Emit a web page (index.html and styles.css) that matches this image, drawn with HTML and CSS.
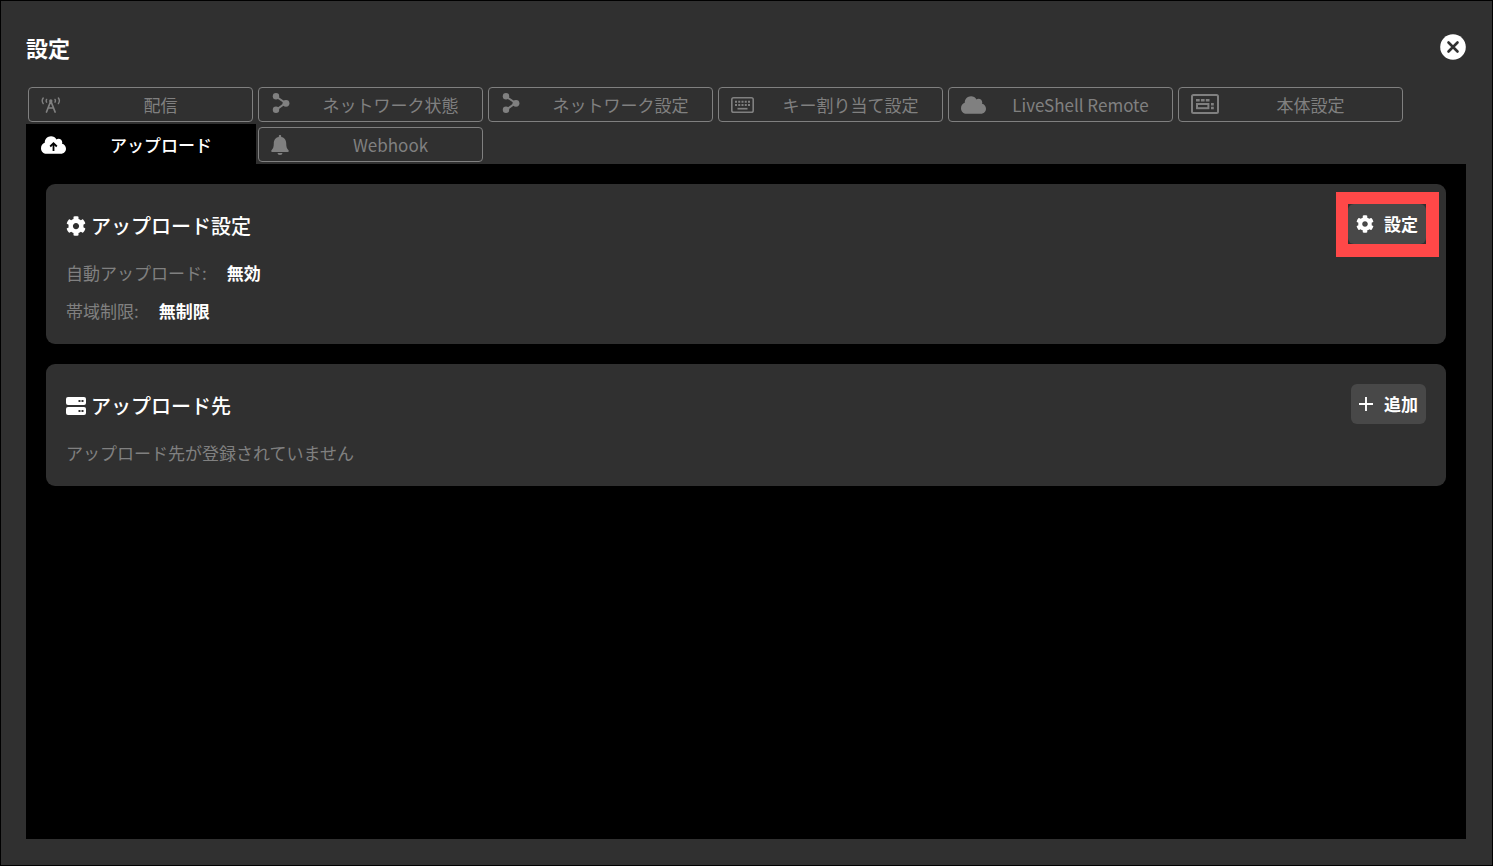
FILE: index.html
```html
<!DOCTYPE html>
<html lang="ja">
<head>
<meta charset="utf-8">
<title>設定</title>
<link rel="stylesheet" href="styles.css">
</head>
<body>
<svg class="sprite" aria-hidden="true">
  <symbol id="cloud" viewBox="0 32 640 448"><path d="M537.6 226.6c4.1-10.7 6.4-22.4 6.4-34.6 0-53-43-96-96-96-19.7 0-38.1 6-53.3 16.2C367 64.2 315.3 32 256 32c-88.400 0-160 71.600-160 160 0 2.700.1 5.400.2 8.100C40.200 219.800 0 273.200 0 336c0 79.500 64.500 144 144 144h368c70.700 0 128-57.300 128-128 0-61.900-44-113.600-102.400-125.400z"/></symbol>
  <symbol id="gear" viewBox="0 0 512 512"><path d="M487.4 315.7l-42.6-24.6c4.3-23.2 4.3-47 0-70.2l42.6-24.6c4.9-2.8 7.1-8.6 5.500-14-11.100-35.600-30-67.800-54.700-94.600-3.800-4.100-10-5.100-14.800-2.300L380.800 110c-17.900-15.400-38.500-27.300-60.800-35.100V25.800c0-5.600-3.900-10.500-9.400-11.700-36.700-8.200-74.300-7.800-109.200 0-5.500 1.200-9.400 6.100-9.400 11.700V75c-22.200 7.900-42.800 19.800-60.800 35.100L88.700 85.500c-4.900-2.800-11-1.900-14.800 2.300-24.700 26.700-43.600 58.900-54.700 94.600-1.700 5.400.6 11.200 5.500 14L67.300 221c-4.300 23.200-4.300 47 0 70.200l-42.600 24.600c-4.900 2.800-7.100 8.600-5.500 14 11.100 35.600 30 67.800 54.700 94.600 3.800 4.100 10 5.100 14.800 2.300l42.600-24.600c17.900 15.400 38.500 27.300 60.800 35.100v49.200c0 5.600 3.900 10.500 9.400 11.700 36.700 8.200 74.300 7.800 109.200 0 5.500-1.200 9.400-6.100 9.400-11.700v-49.200c22.200-7.900 42.800-19.800 60.800-35.100l42.600 24.600c4.900 2.800 11 1.900 14.800-2.300 24.700-26.700 43.600-58.900 54.700-94.600 1.500-5.500-.7-11.300-5.600-14.100zM256 336c-44.100 0-80-35.900-80-80s35.900-80 80-80 80 35.900 80 80-35.900 80-80 80z"/></symbol>
  <symbol id="share" viewBox="0 0 18 20"><path d="M4 3.500 13.500 10 4 17" fill="none" stroke="currentColor" stroke-width="2"/><circle cx="4" cy="3.300" r="3.200"/><circle cx="14" cy="10.300" r="3.400"/><circle cx="4" cy="16.700" r="3.200"/></symbol>
</svg>
<main class="dialog">
  <header class="header">
    <h1 class="title">設定</h1>
    <button class="close" type="button" aria-label="閉じる">
      <svg viewBox="0 0 26 26"><circle cx="13" cy="13" r="12.800" fill="#fff"/><path d="m8.500 8.500 9 9m0-9-9 9" fill="none" stroke="#303030" stroke-width="2.600" stroke-linecap="round"/></svg>
    </button>
  </header>

  <nav class="tabs" aria-label="設定メニュー">
    <button class="tab" type="button"><span class="tab-icon"><svg width="20" height="16" viewBox="0 0 20 16"><g fill="none" stroke="currentColor" stroke-width="1.700" stroke-linecap="round" stroke-linejoin="round"><path d="m5.500 15 4.300-11 4.300 11M7.300 11h5"/><path d="M2.200 1Q.2 3.800 2.200 6.600M17.400 1q2 2.800 0 5.600M5.600 2.400q-.8 1.400 0 2.800M14 2.400q.8 1.400 0 2.800" stroke-width="1.400"/></g><circle cx="9.800" cy="4" r="1.700"/></svg></span><span class="tab-label">配信</span></button>
    <button class="tab" type="button"><span class="tab-icon"><svg class="share" width="18" height="20"><use href="#share"/></svg></span><span class="tab-label">ネットワーク状態</span></button>
    <button class="tab" type="button"><span class="tab-icon"><svg class="share" width="18" height="20"><use href="#share"/></svg></span><span class="tab-label">ネットワーク設定</span></button>
    <button class="tab" type="button"><span class="tab-icon"><svg width="23" height="16" viewBox="0 0 23 16"><rect x=".8" y=".8" width="21.400" height="14.400" rx="1.800" fill="none" stroke="currentColor" stroke-width="1.600"/><path d="M4 4.700h15M4 8h15" fill="none" stroke="currentColor" stroke-width="2" stroke-dasharray="2 1.250"/><path d="M6.500 11.700h10" stroke="currentColor" stroke-width="1.700"/></svg></span><span class="tab-label">キー割り当て設定</span></button>
    <button class="tab" type="button"><span class="tab-icon"><svg width="25" height="18"><use href="#cloud"/></svg></span><span class="tab-label">LiveShell Remote</span></button>
    <button class="tab" type="button"><span class="tab-icon"><svg class="device" width="28" height="20" viewBox="0 0 28 20"><g fill="none" stroke="currentColor" stroke-width="2"><rect x="1" y="1" width="26" height="18" rx="1.500"/><path d="M5 6.200h3.700m1.200 0h3.700m1.200 0h3.700M20 10.300h2.800M20 14h2.800" stroke-width="2.400"/><rect x="6" y="10" width="11.400" height="4.200"/></g></svg></span><span class="tab-label">本体設定</span></button>
    <button class="tab active" type="button" aria-current="page"><span class="tab-icon"><svg width="25" height="18" viewBox="0 0 25 18"><use href="#cloud" width="25" height="18"/><path d="M12.500 15V8M9.200 10.500l3.300-3.300 3.300 3.300" fill="none" stroke="#000" stroke-width="1.800"/></svg></span><span class="tab-label">アップロード</span></button>
    <button class="tab" type="button"><span class="tab-icon"><svg width="18" height="20" viewBox="0 0 18 20"><path d="M9 0c.8 0 1.200.5 1.200 1.200v.7c3.500.6 5 3.300 5 6.300 0 4 .8 5.500 2.300 7 .6.700.3 1.700-.7 1.700H1.200c-1 0-1.300-1-.7-1.700 1.500-1.500 2.300-3 2.300-7 0-3 1.500-5.700 5-6.300v-.7C7.800.5 8.200 0 9 0zM6.500 18h5a2.500 2 0 0 1-5 0z"/></svg></span><span class="tab-label">Webhook</span></button>
  </nav>

  <div class="content">
    <section class="card">
      <div class="card-head">
        <h2 class="card-title"><svg width="20" height="20"><use href="#gear"/></svg>アップロード設定</h2>
        <button class="action highlighted" type="button"><svg width="18" height="18"><use href="#gear"/></svg>設定</button>
      </div>
      <dl class="facts">
        <div class="fact"><dt>自動アップロード:</dt><dd>無効</dd></div>
        <div class="fact"><dt>帯域制限:</dt><dd>無制限</dd></div>
      </dl>
    </section>
    <section class="card">
      <div class="card-head">
        <h2 class="card-title"><svg width="20" height="18" viewBox="0 0 20 18"><rect width="20" height="8" rx="2"/><rect y="10" width="20" height="8" rx="2"/><path d="M12.500 4h2m1 0h2M12.500 14h2m1 0h2" stroke="#303030" stroke-width="2"/></svg>アップロード先</h2>
        <button class="action" type="button"><svg width="15" height="16" viewBox="0 0 15 16"><path d="M7 1v14M0 8h14" fill="none" stroke="currentColor" stroke-width="1.900"/></svg>追加</button>
      </div>
      <p class="empty">アップロード先が登録されていません</p>
    </section>
  </div>
</main>
</body>
</html>
```
FILE: styles.css
```css
* {
  box-sizing: border-box;
}

body {
  margin: 0;
  background: #303030;
  color: #fff;
  font-family: "Noto Sans CJK JP", sans-serif;
  font-size: 17px;
  line-height: 26px;
}

svg {
  flex: none;
  fill: currentColor;
}

button {
  border: 0;
  color: inherit;
  font: inherit;
  cursor: pointer;
}

.sprite {
  position: absolute;
  width: 0;
  height: 0;
}

.dialog {
  display: flex;
  flex-direction: column;
  min-height: 100vh;
  padding: 24px 26px 26px 25px;
  border: 1px solid #000;
}

.header {
  display: flex;
  justify-content: space-between;
  align-items: flex-start;
  height: 59px;
}

.title {
  margin: 6px 0 0;
  font-size: 22px;
  font-weight: 700;
  line-height: 32px;
}

.close {
  display: flex;
  margin-top: 9px;
  padding: 0;
  background: none;
}

.close svg {
  width: 26px;
  height: 26px;
}

.tabs {
  display: flex;
  flex-wrap: wrap;
}

.tab {
  display: flex;
  align-items: center;
  width: 225px;
  height: 35px;
  margin: 3px 3px 2px 2px;
  padding: 0 0 0 12px;
  border: 1px solid #808080;
  border-radius: 4px;
  background: none;
  color: #808080;
}

.tab.active {
  width: 230px;
  height: 40px;
  margin: 0;
  padding: 2px 3px 0 15px;
  border: 0;
  border-radius: 0;
  background: #000;
  color: #fff;
  font-weight: 500;
}

.tab-icon {
  display: flex;
  align-items: center;
  width: 28px;
}

.share {
  margin: 0 0 3px 1px;
}

.device {
  margin-bottom: 2px;
}

.tab-label {
  flex: 1;
  text-align: center;
}

.content {
  display: flex;
  flex: 1;
  flex-direction: column;
  gap: 20px;
  padding: 20px;
  background: #000;
}

.card {
  padding: 20px;
  border-radius: 9px;
  background: #303030;
}

.card-head {
  display: flex;
  justify-content: space-between;
  align-items: center;
}

.card-title {
  display: flex;
  align-items: center;
  gap: 5px;
  margin: 0;
  padding-top: 3px;
  font-size: 20px;
  font-weight: 500;
  line-height: 30px;
}

.action {
  position: relative;
  display: flex;
  align-items: center;
  gap: 10px;
  height: 40px;
  padding: 0 8px;
  border-radius: 6px;
  background: #484848;
  font-weight: 700;
}

.highlighted::after {
  position: absolute;
  inset: -12px -13px -13px -12px;
  border: 12px solid #ff4848;
  border-width: 12px 13px 13px 12px;
  content: "";
  pointer-events: none;
}

.facts {
  display: grid;
  gap: 12px;
  margin: 16px 0 0;
}

.fact {
  display: flex;
  gap: 20px;
}

dt,
.empty {
  color: #808080;
}

dd {
  margin: 0;
  font-weight: 700;
}

.empty {
  margin: 16px 0 0;
}
```
